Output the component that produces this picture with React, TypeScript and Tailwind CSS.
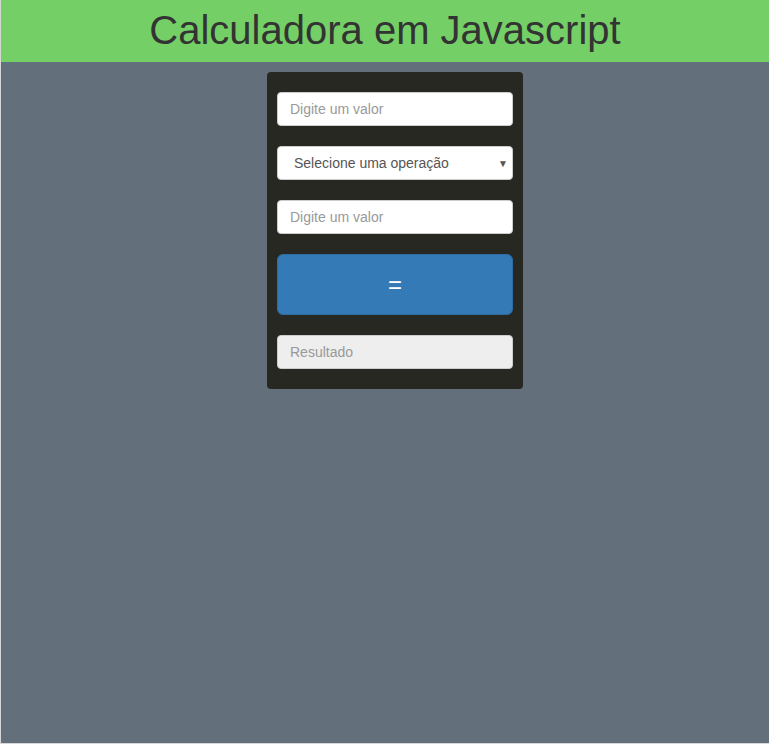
import React from "react";

export default function App() {
  const font = { fontFamily: '"Liberation Sans", Arial, sans-serif' };
  return (
    <div style={font} className="h-[744px] w-[769px] border-l border-b border-[#d6d6d6] bg-[#636f7a] flex flex-col">
      <div className="h-[62px] bg-[#74cf66] flex items-center justify-center">
        <h1 className="text-[40px] leading-none text-[#333333] mt-[-3px]">Calculadora em Javascript</h1>
      </div>
      <div className="flex justify-center pt-[10px] pl-[20px]">
        <div className="w-[256px] bg-[#272822] rounded-[4px] px-[10px] pt-[20px] pb-[20px] flex flex-col gap-[20px]">
          <input
            placeholder="Digite um valor"
            className="h-[34px] w-full rounded-[4px] border border-[#cccccc] bg-white px-[12px] text-[14px] text-[#555] placeholder:text-[#999] outline-none"
          />
          <div className="relative h-[34px] w-full rounded-[4px] border border-[#cccccc] bg-white flex items-center pl-[16px] text-[14px] text-[#555]">
            Selecione uma operação
            <span className="absolute right-[4px] top-[9px] text-[10px] text-[#555]">▼</span>
          </div>
          <input
            placeholder="Digite um valor"
            className="h-[34px] w-full rounded-[4px] border border-[#cccccc] bg-white px-[12px] text-[14px] text-[#555] placeholder:text-[#999] outline-none"
          />
          <button className="h-[61px] w-full rounded-[6px] border border-[#2e6da4] bg-[#337ab7] text-white text-[24px] leading-none flex items-center justify-center">
            =
          </button>
          <input
            disabled
            placeholder="Resultado"
            className="h-[34px] w-full rounded-[4px] border border-[#cccccc] bg-[#eeeeee] px-[12px] text-[14px] text-[#555] placeholder:text-[#999] outline-none"
          />
        </div>
      </div>
    </div>
  );
}
